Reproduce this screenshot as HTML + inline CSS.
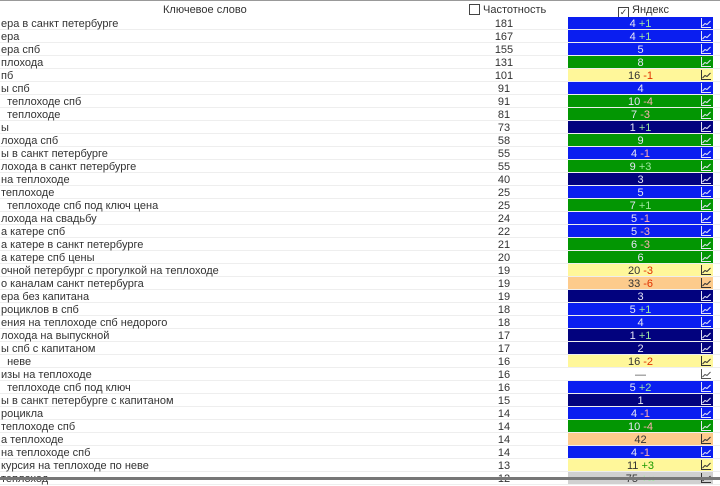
<!DOCTYPE html>
<html><head><meta charset="utf-8"><style>
body{margin:0;width:720px;height:480px;overflow:hidden;background:#fff;font:11px "Liberation Sans","DejaVu Sans",sans-serif;color:#333;position:relative}
.hdr{position:absolute;top:0;left:0;width:720px;height:17px;border-top:1px solid #999;box-sizing:border-box;background:#fff}
.hdr span{position:absolute;top:3px}
.cb{display:inline-block;width:9px;height:9px;border:1px solid #444;vertical-align:-2px;margin-right:3px;background:#fff;font-size:9px;line-height:9px;text-align:center;font-style:normal}
.row{position:absolute;left:0;width:720px;height:13px;border-bottom:1px solid #eee;box-sizing:border-box}
.k{position:absolute;left:1px;top:1px;line-height:13px;white-space:pre}
.f{position:absolute;left:441px;width:126px;top:1px;text-align:center;line-height:13px}
.y{position:absolute;left:568px;width:145px;top:0;height:12px;line-height:14px;text-align:center;color:#e6e6f6}
.y svg{position:absolute;right:2px;top:1px}
.B{background:#0a1ef0}.G{background:#039603}.N{background:#02027e}.Y{background:#fff79a;color:#333}.O{background:#fdcb8c;color:#333}.W{background:#fff;color:#555}.S{background:#d0d0d0;color:#333}
.p{color:#9fe89f}.m{color:#ffb0b0}.Y .m,.O .m{color:#e03000}.Y .p{color:#1a9a00}
.bot{position:absolute;left:0;top:477px;width:720px;height:3px;background:#777}
</style></head><body>
<svg width="0" height="0" style="position:absolute"><defs><symbol id="ic" viewBox="0 0 10 10"><path d="M0.5 0V9.5H10M1.5 8L4 5.5L6 6.5L9.5 3" fill="none" stroke="currentColor" stroke-width="1"/></symbol></defs></svg>
<div class="hdr"><span style="left:163px">Ключевое слово</span><span style="left:469px"><i class="cb"></i>Частотность</span><span style="left:618px"><i class="cb">✓</i>Яндекс</span></div>
<div class="row" style="top:17px"><span class="k">ера в санкт петербурге</span><span class="f">181</span><div class="y B">4 <span class="p">+1</span><svg width="10" height="10"><use href="#ic"/></svg></div></div>
<div class="row" style="top:30px"><span class="k">ера</span><span class="f">167</span><div class="y B">4 <span class="p">+1</span><svg width="10" height="10"><use href="#ic"/></svg></div></div>
<div class="row" style="top:43px"><span class="k">ера спб</span><span class="f">155</span><div class="y B">5<svg width="10" height="10"><use href="#ic"/></svg></div></div>
<div class="row" style="top:56px"><span class="k">плохода</span><span class="f">131</span><div class="y G">8<svg width="10" height="10"><use href="#ic"/></svg></div></div>
<div class="row" style="top:69px"><span class="k">пб</span><span class="f">101</span><div class="y Y">16 <span class="m">-1</span><svg width="10" height="10"><use href="#ic"/></svg></div></div>
<div class="row" style="top:82px"><span class="k">ы спб</span><span class="f">91</span><div class="y B">4<svg width="10" height="10"><use href="#ic"/></svg></div></div>
<div class="row" style="top:95px"><span class="k">  теплоходе спб</span><span class="f">91</span><div class="y G">10 <span class="m">-4</span><svg width="10" height="10"><use href="#ic"/></svg></div></div>
<div class="row" style="top:108px"><span class="k">  теплоходе</span><span class="f">81</span><div class="y G">7 <span class="m">-3</span><svg width="10" height="10"><use href="#ic"/></svg></div></div>
<div class="row" style="top:121px"><span class="k">ы</span><span class="f">73</span><div class="y N">1 <span class="p">+1</span><svg width="10" height="10"><use href="#ic"/></svg></div></div>
<div class="row" style="top:134px"><span class="k">лохода спб</span><span class="f">58</span><div class="y G">9<svg width="10" height="10"><use href="#ic"/></svg></div></div>
<div class="row" style="top:147px"><span class="k">ы в санкт петербурге</span><span class="f">55</span><div class="y B">4 <span class="m">-1</span><svg width="10" height="10"><use href="#ic"/></svg></div></div>
<div class="row" style="top:160px"><span class="k">лохода в санкт петербурге</span><span class="f">55</span><div class="y G">9 <span class="p">+3</span><svg width="10" height="10"><use href="#ic"/></svg></div></div>
<div class="row" style="top:173px"><span class="k">на теплоходе</span><span class="f">40</span><div class="y N">3<svg width="10" height="10"><use href="#ic"/></svg></div></div>
<div class="row" style="top:186px"><span class="k">теплоходе</span><span class="f">25</span><div class="y B">5<svg width="10" height="10"><use href="#ic"/></svg></div></div>
<div class="row" style="top:199px"><span class="k">  теплоходе спб под ключ цена</span><span class="f">25</span><div class="y G">7 <span class="p">+1</span><svg width="10" height="10"><use href="#ic"/></svg></div></div>
<div class="row" style="top:212px"><span class="k">лохода на свадьбу</span><span class="f">24</span><div class="y B">5 <span class="m">-1</span><svg width="10" height="10"><use href="#ic"/></svg></div></div>
<div class="row" style="top:225px"><span class="k">а катере спб</span><span class="f">22</span><div class="y B">5 <span class="m">-3</span><svg width="10" height="10"><use href="#ic"/></svg></div></div>
<div class="row" style="top:238px"><span class="k">а катере в санкт петербурге</span><span class="f">21</span><div class="y G">6 <span class="m">-3</span><svg width="10" height="10"><use href="#ic"/></svg></div></div>
<div class="row" style="top:251px"><span class="k">а катере спб цены</span><span class="f">20</span><div class="y G">6<svg width="10" height="10"><use href="#ic"/></svg></div></div>
<div class="row" style="top:264px"><span class="k">очной петербург с прогулкой на теплоходе</span><span class="f">19</span><div class="y Y">20 <span class="m">-3</span><svg width="10" height="10"><use href="#ic"/></svg></div></div>
<div class="row" style="top:277px"><span class="k">о каналам санкт петербурга</span><span class="f">19</span><div class="y O">33 <span class="m">-6</span><svg width="10" height="10"><use href="#ic"/></svg></div></div>
<div class="row" style="top:290px"><span class="k">ера без капитана</span><span class="f">19</span><div class="y N">3<svg width="10" height="10"><use href="#ic"/></svg></div></div>
<div class="row" style="top:303px"><span class="k">роциклов в спб</span><span class="f">18</span><div class="y B">5 <span class="p">+1</span><svg width="10" height="10"><use href="#ic"/></svg></div></div>
<div class="row" style="top:316px"><span class="k">ения на теплоходе спб недорого</span><span class="f">18</span><div class="y B">4<svg width="10" height="10"><use href="#ic"/></svg></div></div>
<div class="row" style="top:329px"><span class="k">лохода на выпускной</span><span class="f">17</span><div class="y N">1 <span class="p">+1</span><svg width="10" height="10"><use href="#ic"/></svg></div></div>
<div class="row" style="top:342px"><span class="k">ы спб с капитаном</span><span class="f">17</span><div class="y N">2<svg width="10" height="10"><use href="#ic"/></svg></div></div>
<div class="row" style="top:355px"><span class="k">  неве</span><span class="f">16</span><div class="y Y">16 <span class="m">-2</span><svg width="10" height="10"><use href="#ic"/></svg></div></div>
<div class="row" style="top:368px"><span class="k">изы на теплоходе</span><span class="f">16</span><div class="y W">—<svg width="10" height="10"><use href="#ic"/></svg></div></div>
<div class="row" style="top:381px"><span class="k">  теплоходе спб под ключ</span><span class="f">16</span><div class="y B">5 <span class="p">+2</span><svg width="10" height="10"><use href="#ic"/></svg></div></div>
<div class="row" style="top:394px"><span class="k">ы в санкт петербурге с капитаном</span><span class="f">15</span><div class="y N">1<svg width="10" height="10"><use href="#ic"/></svg></div></div>
<div class="row" style="top:407px"><span class="k">роцикла</span><span class="f">14</span><div class="y B">4 <span class="m">-1</span><svg width="10" height="10"><use href="#ic"/></svg></div></div>
<div class="row" style="top:420px"><span class="k">теплоходе спб</span><span class="f">14</span><div class="y G">10 <span class="m">-4</span><svg width="10" height="10"><use href="#ic"/></svg></div></div>
<div class="row" style="top:433px"><span class="k">а теплоходе</span><span class="f">14</span><div class="y O">42<svg width="10" height="10"><use href="#ic"/></svg></div></div>
<div class="row" style="top:446px"><span class="k">на теплоходе спб</span><span class="f">14</span><div class="y B">4 <span class="m">-1</span><svg width="10" height="10"><use href="#ic"/></svg></div></div>
<div class="row" style="top:459px"><span class="k">курсия на теплоходе по неве</span><span class="f">13</span><div class="y Y">11 <span class="p">+3</span><svg width="10" height="10"><use href="#ic"/></svg></div></div>
<div class="row" style="top:472px"><span class="k">теплоход</span><span class="f">12</span><div class="y S">75 <span class="p">+∞</span><svg width="10" height="10"><use href="#ic"/></svg></div></div>
<div class="bot"></div>
</body></html>
